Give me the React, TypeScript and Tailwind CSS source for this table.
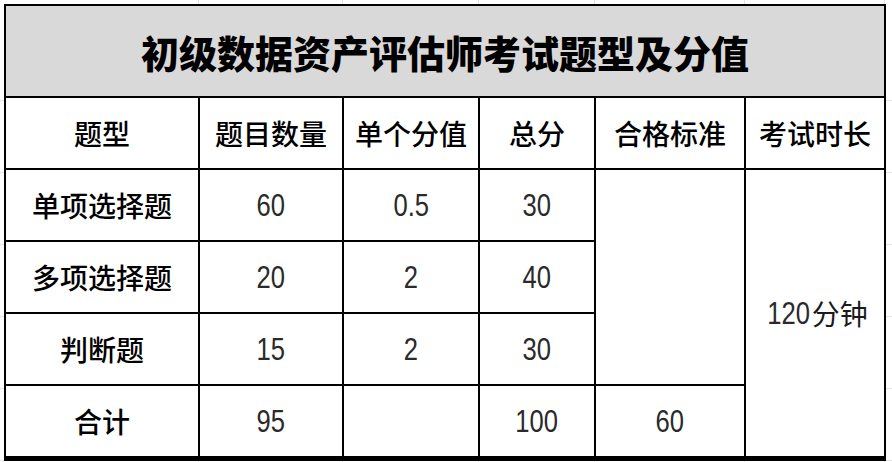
const cjk = "font-['Noto_Sans_CJK_SC',sans-serif]";
const num = "font-['Liberation_Sans',Arial,sans-serif]";

// column pitch of the sheet grid around the table (line every column edge)
const colPitch = [199, 144, 136, 116, 150, 140];
const rowPitch = [97, 72, 72, 72, 72, 72];

function HStrip() {
  return (
    <div className="flex h-[4px]">
      {colPitch.map((w, i) => (
        <div key={i} className="shrink-0 border-r border-[#e3e3e3]" style={{ width: w }} />
      ))}
      <div className="flex-1" />
    </div>
  );
}

function VStrip({ width }: { width: number }) {
  return (
    <div className="flex flex-col shrink-0" style={{ width }}>
      {rowPitch.map((h, i) => (
        <div key={i} className="shrink-0 border-b border-[#e3e3e3]" style={{ height: h }} />
      ))}
    </div>
  );
}

function Head({ children }: { children: string }) {
  return (
    <div className={`flex items-center justify-center bg-white text-[28px] font-medium text-black ${cjk}`}>
      {children}
    </div>
  );
}

function Digits({ children }: { children: string }) {
  return (
    <span className={`inline-block scale-x-[0.8] text-[32px] leading-none text-[#2a2a2a] ${num}`}>
      {children}
    </span>
  );
}

function Num({ children }: { children?: string }) {
  return (
    <div className="flex items-center justify-center bg-white">
      {children && <Digits>{children}</Digits>}
    </div>
  );
}

const rows = [
  { name: '单项选择题', count: '60', each: '0.5', total: '30' },
  { name: '多项选择题', count: '20', each: '2', total: '40' },
  { name: '判断题', count: '15', each: '2', total: '30' },
];

export default function App() {
  return (
    <div className="w-[892px] h-[462px] overflow-hidden bg-white">
      <HStrip />
      <div className="flex">
        <VStrip width={4} />
        <div className="grid grid-cols-[192px_142px_134px_114px_148px_138px] grid-rows-[90px_70px_70px_70px_70px_70px] gap-[2px] bg-black p-[2px]">
          <div
            className={`col-span-6 flex items-center justify-center bg-[#d9d9d9] text-[38px] font-black text-black ${cjk}`}
          >
            初级数据资产评估师考试题型及分值
          </div>

          <Head>题型</Head>
          <Head>题目数量</Head>
          <Head>单个分值</Head>
          <Head>总分</Head>
          <Head>合格标准</Head>
          <Head>考试时长</Head>

          {rows.map((r, i) => (
            <div key={r.name} className="contents">
              <Head>{r.name}</Head>
              <Num>{r.count}</Num>
              <Num>{r.each}</Num>
              <Num>{r.total}</Num>
              {i === 0 && <div className="row-span-3 bg-white" />}
              {i === 0 && (
                <div className="row-span-4 flex items-center justify-center bg-white">
                  <span className="-mr-[4px]">
                    <Digits>120</Digits>
                  </span>
                  <span className={`text-[28px] text-[#1a1a1a] ${cjk}`}>分钟</span>
                </div>
              )}
            </div>
          ))}

          <Head>合计</Head>
          <Num>95</Num>
          <Num />
          <Num>100</Num>
          <Num>60</Num>
        </div>
        <div className="flex-1">
          <VStrip width={6} />
        </div>
      </div>
      <HStrip />
    </div>
  );
}
